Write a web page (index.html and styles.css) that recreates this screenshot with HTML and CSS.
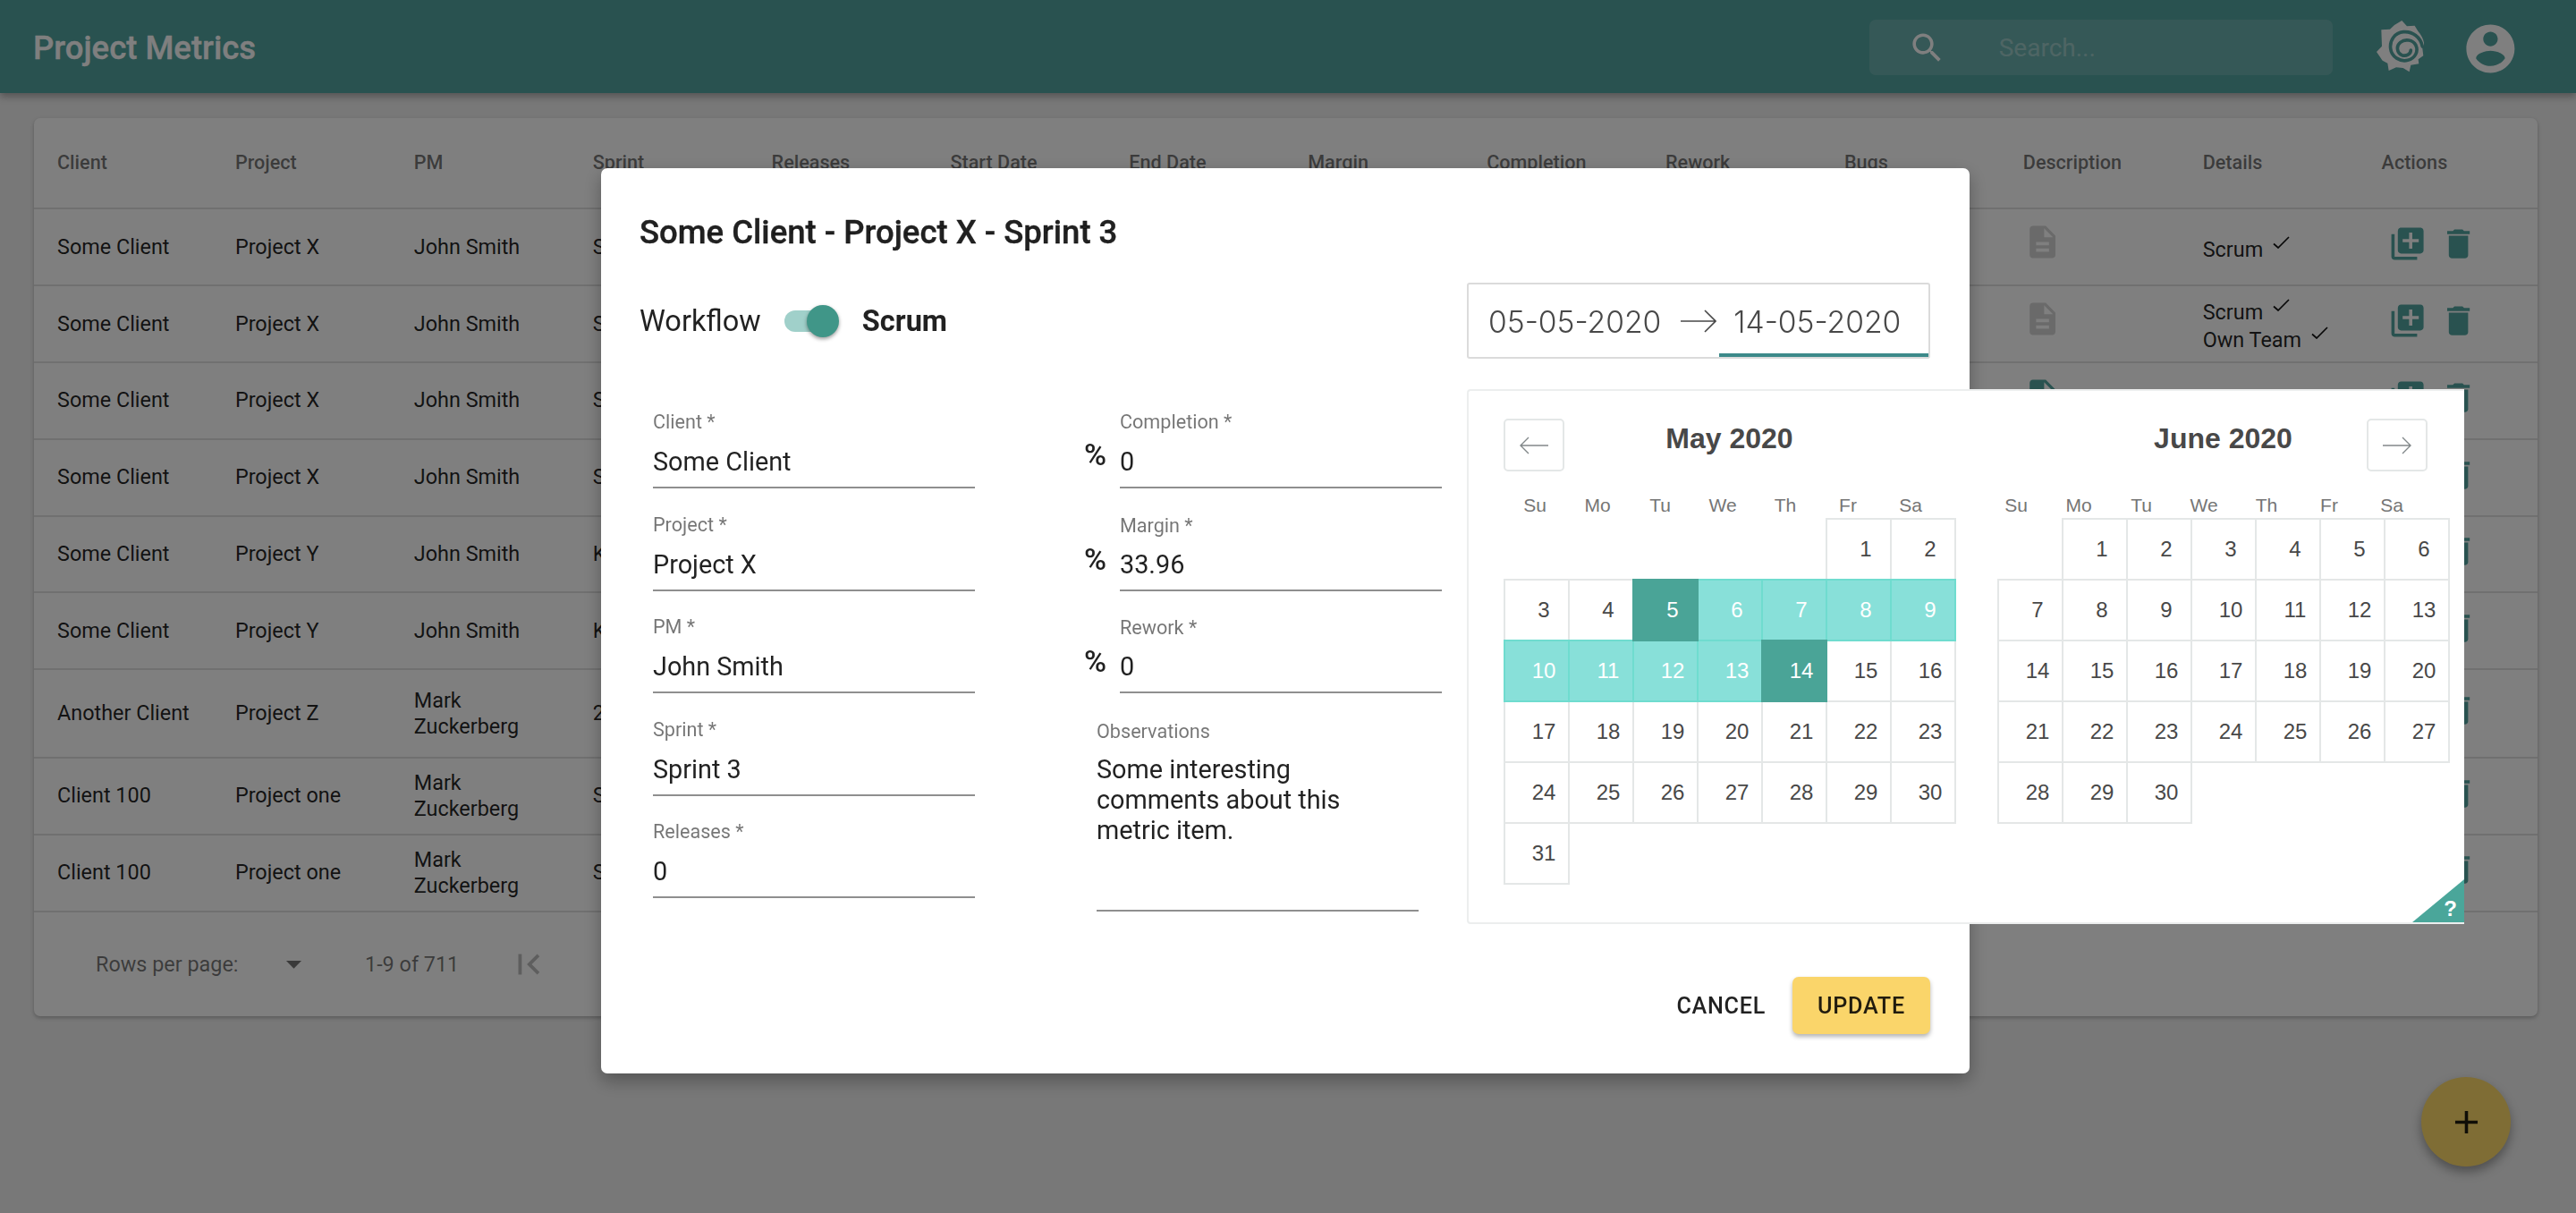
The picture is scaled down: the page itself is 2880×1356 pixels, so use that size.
FILE: index.html
```html
<!DOCTYPE html>
<html lang="en">
<head>
<meta charset="utf-8">
<title>Project Metrics</title>
<link rel="stylesheet" href="styles.css">
</head>
<body>
<svg class="sprite" aria-hidden="true">
  <symbol id="i-doc" viewBox="0 0 24 24"><path d="M14 2H6c-1.1 0-2 .9-2 2v16c0 1.1.9 2 2 2h12c1.1 0 2-.9 2-2V8l-6-6zm2 16H8v-2h8v2zm0-4H8v-2h8v2zm-3-5V3.5L18.5 9H13z"/></symbol>
  <symbol id="i-add" viewBox="0 0 24 24"><path d="M4 6H2v14c0 1.1.9 2 2 2h14v-2H4V6zm16-4H8c-1.1 0-2 .9-2 2v12c0 1.1.9 2 2 2h12c1.1 0 2-.9 2-2V4c0-1.1-.9-2-2-2zm-1 9h-4v4h-2v-4H9V9h4V5h2v4h4v2z"/></symbol>
  <symbol id="i-del" viewBox="0 0 24 24"><path d="M6 19c0 1.1.9 2 2 2h8c1.1 0 2-.9 2-2V7H6v12zM19 4h-3.5l-1-1h-5l-1 1H5v2h14V4z"/></symbol>
  <symbol id="i-check" viewBox="0 0 19 14"><path d="M1 8.5 6 13 18 1" fill="none" stroke="currentColor" stroke-width="1.7"/></symbol>
</svg>

<header class="appbar">
  <h1 class="app-title">Project Metrics</h1>
  <div class="search">
    <svg class="search-icon" viewBox="0 0 24 24"><path d="M15.5 14h-.79l-.28-.27C15.41 12.59 16 11.11 16 9.5 16 5.91 13.09 3 9.5 3S3 5.91 3 9.5 5.91 16 9.5 16c1.61 0 3.09-.59 4.23-1.57l.27.28v.79l5 4.99L20.49 19l-4.99-5zm-6 0C7.01 14 5 11.99 5 9.5S7.01 5 9.5 5 14 7.01 14 9.5 11.99 14 9.5 14z"/></svg>
    <span class="search-text">Search...</span>
  </div>
  <svg class="gear" viewBox="50 37 160 173">
    <path class="gear-body" d="M135 37 152 56 178 54 189 72C203 88 210 105 210 122L203 122 207 155 190 167 192 182 165 186 160 209 139 196 116 194 91 205 87 180 70 171 50 142 68 123 66 68 95 66 110 52Z"/>
    <path class="gear-swirl" d="M204 124C198 92 170 72 140 75 110 78 94 104 97 130 100 160 130 176 155 170 180 164 191 140 182 120 172 100 145 98 130 110 115 122 118 145 135 153 150 158 165 150 165 136"/>
  </svg>
  <svg class="account" viewBox="0 0 24 24"><path d="M12 2C6.48 2 2 6.48 2 12s4.48 10 10 10 10-4.48 10-10S17.52 2 12 2zm0 3c1.66 0 3 1.34 3 3s-1.34 3-3 3-3-1.34-3-3 1.34-3 3-3zm0 14.2c-2.5 0-4.71-1.28-6-3.22.03-1.99 4-3.08 6-3.08 1.99 0 5.97 1.09 6 3.08-1.29 1.94-3.5 3.22-6 3.22z"/></svg>
</header>

<main class="content">
  <section class="card">
    <div class="row head">
      <span>Client</span><span>Project</span><span>PM</span><span>Sprint</span><span>Releases</span><span>Start Date</span><span>End Date</span><span>Margin</span><span>Completion</span><span>Rework</span><span>Bugs</span><span>Description</span><span>Details</span><span>Actions</span>
    </div>
    <div class="row">
      <span>Some Client</span><span>Project X</span><span>John Smith</span><span class="clip">Sprint 3</span>
      <span class="cell-icon"><svg class="ico doc-empty"><use href="#i-doc"/></svg></span>
      <span class="details"><span class="tag">Scrum<svg class="check"><use href="#i-check"/></svg></span></span>
      <span class="actions"><svg class="ico teal"><use href="#i-add"/></svg><svg class="ico teal"><use href="#i-del"/></svg></span>
    </div>
    <div class="row">
      <span>Some Client</span><span>Project X</span><span>John Smith</span><span class="clip">Sprint 2</span>
      <span class="cell-icon"><svg class="ico doc-empty"><use href="#i-doc"/></svg></span>
      <span class="details"><span class="tag">Scrum<svg class="check"><use href="#i-check"/></svg></span><span class="tag">Own Team<svg class="check"><use href="#i-check"/></svg></span></span>
      <span class="actions"><svg class="ico teal"><use href="#i-add"/></svg><svg class="ico teal"><use href="#i-del"/></svg></span>
    </div>
    <div class="row">
      <span>Some Client</span><span>Project X</span><span>John Smith</span><span class="clip">Sprint 1</span>
      <span class="cell-icon"><svg class="ico teal"><use href="#i-doc"/></svg></span>
      <span class="details"></span>
      <span class="actions"><svg class="ico teal"><use href="#i-add"/></svg><svg class="ico teal"><use href="#i-del"/></svg></span>
    </div>
    <div class="row">
      <span>Some Client</span><span>Project X</span><span>John Smith</span><span class="clip">Sprint 0</span>
      <span class="cell-icon"><svg class="ico teal"><use href="#i-doc"/></svg></span>
      <span class="details"></span>
      <span class="actions"><svg class="ico teal"><use href="#i-add"/></svg><svg class="ico teal"><use href="#i-del"/></svg></span>
    </div>
    <div class="row">
      <span>Some Client</span><span>Project Y</span><span>John Smith</span><span class="clip">Kanban</span>
      <span class="cell-icon"><svg class="ico teal"><use href="#i-doc"/></svg></span>
      <span class="details"></span>
      <span class="actions"><svg class="ico teal"><use href="#i-add"/></svg><svg class="ico teal"><use href="#i-del"/></svg></span>
    </div>
    <div class="row">
      <span>Some Client</span><span>Project Y</span><span>John Smith</span><span class="clip">Kanban</span>
      <span class="cell-icon"><svg class="ico teal"><use href="#i-doc"/></svg></span>
      <span class="details"></span>
      <span class="actions"><svg class="ico teal"><use href="#i-add"/></svg><svg class="ico teal"><use href="#i-del"/></svg></span>
    </div>
    <div class="row tall">
      <span>Another Client</span><span>Project Z</span><span>Mark<br>Zuckerberg</span><span class="clip">2020</span>
      <span class="cell-icon"><svg class="ico teal"><use href="#i-doc"/></svg></span>
      <span class="details"></span>
      <span class="actions"><svg class="ico teal"><use href="#i-add"/></svg><svg class="ico teal"><use href="#i-del"/></svg></span>
    </div>
    <div class="row">
      <span>Client 100</span><span>Project one</span><span>Mark<br>Zuckerberg</span><span class="clip">Sprint 2</span>
      <span class="cell-icon"><svg class="ico teal"><use href="#i-doc"/></svg></span>
      <span class="details"></span>
      <span class="actions"><svg class="ico teal"><use href="#i-add"/></svg><svg class="ico teal"><use href="#i-del"/></svg></span>
    </div>
    <div class="row">
      <span>Client 100</span><span>Project one</span><span>Mark<br>Zuckerberg</span><span class="clip">Sprint 1</span>
      <span class="cell-icon"><svg class="ico teal"><use href="#i-doc"/></svg></span>
      <span class="details"></span>
      <span class="actions"><svg class="ico teal"><use href="#i-add"/></svg><svg class="ico teal"><use href="#i-del"/></svg></span>
    </div>
    <footer class="pager">
      <span class="pager-label">Rows per page:</span>
      <svg class="pager-caret" viewBox="0 0 24 24"><path d="M7 10l5 5 5-5z"/></svg>
      <span class="pager-count">1-9 of 711</span>
      <svg class="pager-btn first" viewBox="0 0 24 24"><path d="M18.41 16.59L13.82 12l4.59-4.59L17 6l-6 6 6 6zM6 6h2v12H6z"/></svg>
      <svg class="pager-btn prev" viewBox="0 0 24 24"><path d="M15.41 7.41L14 6l-6 6 6 6 1.41-1.41L10.83 12z"/></svg>
    </footer>
  </section>
</main>

<button class="fab" type="button" aria-label="Add"><svg viewBox="0 0 24 24"><path d="M19 13h-6v6h-2v-6H5v-2h6V5h2v6h6v2z"/></svg></button>

<div class="backdrop">
  <div class="modal" role="dialog">
    <h2 class="modal-title">Some Client - Project X - Sprint 3</h2>
    <div class="modal-top">
      <div class="workflow">
        <span class="workflow-label">Workflow</span>
        <span class="toggle"><span class="toggle-track"></span><span class="toggle-knob"></span></span>
        <strong class="workflow-value">Scrum</strong>
      </div>
      <div class="daterange">
        <span class="date-input">05-05-2020</span>
        <svg class="date-arrow" viewBox="0 0 40 26"><path d="M0 13H39M27 1 39 13 27 25"/></svg>
        <span class="date-input date-active">14-05-2020</span>

        <div class="calendar">
          <button class="cal-nav cal-prev" type="button" aria-label="Previous month"><svg viewBox="0 0 32 20"><path d="M32 10H1M10 1 1 10 10 19"/></svg></button>
          <button class="cal-nav cal-next" type="button" aria-label="Next month"><svg viewBox="0 0 32 20"><path d="M0 10H31M22 1 31 10 22 19"/></svg></button>
          <div class="month">
            <div class="month-title">May 2020</div>
            <div class="week-names"><span>Su</span><span>Mo</span><span>Tu</span><span>We</span><span>Th</span><span>Fr</span><span>Sa</span></div>
            <div class="days">
              <span class="blank"></span><span class="blank"></span><span class="blank"></span><span class="blank"></span><span class="blank"></span><span class="day">1</span><span class="day">2</span>
              <span class="day">3</span><span class="day">4</span><span class="day sel">5</span><span class="day rng">6</span><span class="day rng">7</span><span class="day rng">8</span><span class="day rng">9</span>
              <span class="day rng">10</span><span class="day rng">11</span><span class="day rng">12</span><span class="day rng">13</span><span class="day sel">14</span><span class="day">15</span><span class="day">16</span>
              <span class="day">17</span><span class="day">18</span><span class="day">19</span><span class="day">20</span><span class="day">21</span><span class="day">22</span><span class="day">23</span>
              <span class="day">24</span><span class="day">25</span><span class="day">26</span><span class="day">27</span><span class="day">28</span><span class="day">29</span><span class="day">30</span>
              <span class="day">31</span>
            </div>
          </div>
          <div class="month month-next">
            <div class="month-title">June 2020</div>
            <div class="week-names"><span>Su</span><span>Mo</span><span>Tu</span><span>We</span><span>Th</span><span>Fr</span><span>Sa</span></div>
            <div class="days">
              <span class="blank"></span><span class="day">1</span><span class="day">2</span><span class="day">3</span><span class="day">4</span><span class="day">5</span><span class="day">6</span>
              <span class="day">7</span><span class="day">8</span><span class="day">9</span><span class="day">10</span><span class="day">11</span><span class="day">12</span><span class="day">13</span>
              <span class="day">14</span><span class="day">15</span><span class="day">16</span><span class="day">17</span><span class="day">18</span><span class="day">19</span><span class="day">20</span>
              <span class="day">21</span><span class="day">22</span><span class="day">23</span><span class="day">24</span><span class="day">25</span><span class="day">26</span><span class="day">27</span>
              <span class="day">28</span><span class="day">29</span><span class="day">30</span>
            </div>
          </div>
          <span class="cal-help">?</span>
        </div>
      </div>
    </div>

    <div class="form">
      <div class="form-col">
        <div class="field"><label>Client *</label><div class="value">Some Client</div></div>
        <div class="field"><label>Project *</label><div class="value">Project X</div></div>
        <div class="field"><label>PM *</label><div class="value">John Smith</div></div>
        <div class="field"><label>Sprint *</label><div class="value">Sprint 3</div></div>
        <div class="field"><label>Releases *</label><div class="value">0</div></div>
      </div>
      <div class="form-col">
        <div class="pct-row"><span class="pct">%</span><div class="field"><label>Completion *</label><div class="value">0</div></div></div>
        <div class="pct-row"><span class="pct">%</span><div class="field"><label>Margin *</label><div class="value">33.96</div></div></div>
        <div class="pct-row"><span class="pct">%</span><div class="field"><label>Rework *</label><div class="value">0</div></div></div>
        <div class="field notes"><label>Observations</label><div class="value">Some interesting comments about this metric item.</div></div>
      </div>
    </div>

    <div class="modal-actions">
      <button class="btn" type="button">Cancel</button>
      <button class="btn btn-primary" type="button">Update</button>
    </div>
  </div>
</div>
</body>
</html>
```

FILE: styles.css
```css
* { box-sizing: border-box; }
html, body { margin: 0; height: 100%; overflow: hidden; }
body {
  background: #f0f0f0;
  font-family: Roboto, "Liberation Sans", sans-serif;
  color: rgba(0, 0, 0, .87);
}
.sprite { display: none; }

/* app bar */
.appbar {
  height: 104px;
  background: #52a4a0;
  display: flex;
  align-items: center;
  padding: 0 63.6px 0 37px;
  box-shadow: 0 4px 8px rgba(0, 0, 0, .3);
  position: relative;
}
.app-title { margin: 2px 0 0; font-size: 36.5px; font-weight: 500; color: #fff; flex: 1; -webkit-text-stroke: .35px #fff; }
.search {
  width: 518px;
  height: 62px;
  margin-top: 2px;
  border-radius: 7px;
  background: rgba(255, 255, 255, .15);
  display: flex;
  align-items: center;
  padding-left: 43px;
}
.search-icon { width: 43px; height: 43px; fill: #fff; }
.search-text { margin-left: 59px; font-size: 28px; color: rgba(255, 255, 255, .36); }
.gear { width: 53.3px; height: 57.7px; margin-left: 49px; }
.gear-body { fill: #fff; }
.gear-swirl { fill: none; stroke: #52a4a0; stroke-width: 11; stroke-linecap: round; }
.account { width: 64.8px; height: 64.8px; margin-left: 41.6px; fill: #fff; margin-top: 4px; }

/* table card */
.content { padding: 28px 43px 0 38px; }
.card {
  background: #fff;
  border-radius: 7px;
  box-shadow: 0 2px 4px rgba(0, 0, 0, .25);
  overflow: hidden;
}
.row {
  display: grid;
  grid-template-columns: 198.9px repeat(9, 199.9px) 199.9px 200.9px 199.9px 1fr;
  align-items: center;
  height: 85.9px;
  padding-left: 26px;
  border-bottom: 2px solid #e0e0e0;
  font-size: 23.4px;
  line-height: 28.5px;
}
.row.head { height: 102px; padding-top: 1px; font-size: 21.6px; font-weight: 500; color: rgba(0, 0, 0, .54); }
.row.tall { height: 98.4px; }
.clip { grid-column: 4 / span 8; width: 10px; overflow: hidden; white-space: nowrap; }
.ico { width: 43.2px; height: 43.2px; display: block; }
.teal { fill: #52a4a0; }
.doc-empty { fill: #d4d4d4; }
.cell-icon { padding-bottom: 10px; }
.actions { display: flex; gap: 14.4px; padding: 0 0 7px 7px; }
.details { display: flex; flex-direction: column; padding-top: 7px; }
.tag { line-height: 31px; white-space: nowrap; }
.check { width: 19px; height: 14px; margin-left: 11px; vertical-align: 9px; color: #111; overflow: visible; }

.pager {
  height: 116px;
  display: flex;
  align-items: center;
  padding-left: 69px;
  font-size: 23.4px;
  color: rgba(0, 0, 0, .54);
}
.pager-label { width: 156px; white-space: nowrap; }
.pager-caret { width: 41px; height: 41px; margin-left: 45px; fill: rgba(0, 0, 0, .54); flex: none; }
.pager-count { width: 102px; margin-left: 59px; white-space: nowrap; }
.pager-btn { width: 46px; height: 46px; fill: rgba(0, 0, 0, .26); flex: none; }
.pager-btn.first { margin-left: 58px; }
.pager-btn.prev { margin-left: 46px; }

/* floating action */
.fab {
  position: fixed;
  right: 73px;
  bottom: 52px;
  width: 100px;
  height: 100px;
  border: 0;
  padding: 0;
  border-radius: 50%;
  background: #feda6a;
  box-shadow: 0 6px 12px rgba(0, 0, 0, .35);
  display: flex;
  align-items: center;
  justify-content: center;
}
.fab svg { width: 43px; height: 43px; fill: rgba(0, 0, 0, .87); }

/* dialog */
.backdrop { position: fixed; inset: 0; background: rgba(0, 0, 0, .5); }
.modal {
  position: absolute;
  left: 672px;
  top: 188px;
  width: 1530px;
  height: 1012px;
  background: #fff;
  border-radius: 7px;
  padding: 50px 44px 44px;
  display: flex;
  flex-direction: column;
  box-shadow: 0 8px 20px rgba(0, 0, 0, .3);
}
.modal-title { margin: 0 0 0 -1px; font-size: 36.5px; line-height: 44px; font-weight: 500; -webkit-text-stroke: .35px rgba(0, 0, 0, .87); }
.modal-top { display: flex; justify-content: space-between; align-items: center; margin-top: 34px; height: 85px; }
.workflow { display: flex; align-items: center; gap: 26px; font-size: 32.5px; margin-left: -1px; }
.workflow-value { font-weight: 700; }
.toggle { display: flex; align-items: center; }
.toggle-track { width: 54px; height: 24px; border-radius: 12px; background: #a0d0ca; }
.toggle-knob { width: 36px; height: 36px; margin-left: -29px; border-radius: 50%; background: #409688; box-shadow: 0 2px 4px rgba(0, 0, 0, .4); }

.daterange {
  position: relative;
  width: 518px;
  height: 85px;
  border: 2px solid #dbdbdb;
  border-radius: 3px;
  display: flex;
  align-items: center;
  padding: 1px 0 0 22px;
}
.date-input { font-family: Inter, Roboto, sans-serif; font-size: 33.6px; font-weight: 300; color: #484848; white-space: nowrap; }
.date-arrow { width: 40px; height: 26px; margin: 0 19px 0 22px; fill: none; stroke: #484848; stroke-width: 1.6; }
.date-active::after {
  content: "";
  position: absolute;
  left: 280px;
  right: 0;
  bottom: 0;
  height: 4px;
  background: #3c8a8a;
}

/* calendar */
.calendar {
  position: absolute;
  left: -2px;
  top: 117px;
  width: 1115px;
  height: 598px;
  background: #fff;
  border: 2px solid #eceeee;
  border-right: 0;
  border-radius: 4px 0 0 4px;
  display: flex;
  gap: 47px;
  padding-left: 39px;
  font-family: "Liberation Sans", Arial, sans-serif;
  color: #484848;
}
.cal-nav {
  position: absolute;
  top: 31px;
  width: 68px;
  height: 59px;
  padding: 0;
  background: #fff;
  border: 2px solid #e4e7e7;
  border-radius: 5px;
  display: flex;
  align-items: center;
  justify-content: center;
}
.cal-nav svg { width: 32px; height: 20px; fill: none; stroke: #82888a; stroke-width: 1.4; }
.cal-prev { left: 39px; }
.cal-next { right: 41px; }
.month { width: 505px; }
.month-title { height: 110px; padding-top: 33px; text-align: center; font-size: 32px; font-weight: 700; line-height: 40px; }
.week-names { display: grid; grid-template-columns: repeat(7, 70px); height: 32px; color: #757575; font-size: 21px; line-height: 36px; text-align: center; }
.month-next .week-names { margin-left: -14px; }
.days { display: grid; grid-template-columns: repeat(7, 72px); grid-auto-rows: 68px; }
.day {
  position: relative;
  width: 74px;
  height: 70px;
  border: 2px solid #e4e7e7;
  padding-left: 16px;
  font-size: 24px;
  line-height: 66px;
  text-align: center;
}
.rng { background: #88e0d9; border-color: #6fdccf; color: #fff; z-index: 1; }
.sel { background: #4aa497; border-color: #4aa497; color: #fff; z-index: 2; }
.cal-help {
  position: absolute;
  right: 0;
  bottom: 0;
  width: 58px;
  height: 48px;
  padding: 19px 8px 0 0;
  background: #4aa69a;
  clip-path: polygon(100% 0, 100% 100%, 0 100%);
  color: #fff;
  font-size: 24px;
  font-weight: 700;
  line-height: 28px;
  text-align: right;
}

/* form */
.form { display: grid; grid-template-columns: 360px 400px; column-gap: 122px; margin: 30px 0 0 14px; }
.field { height: 114.5px; padding-top: 28px; }
.field label { display: block; font-size: 21.6px; line-height: 26px; color: rgba(0, 0, 0, .54); }
.value { height: 47px; margin-top: 14px; border-bottom: 2px solid #8f8f8f; font-size: 28.8px; line-height: 34px; }
.pct-row { display: flex; }
.pct-row + .pct-row label { position: relative; top: 1px; }
.pct-row .field { width: 360px; }
.pct { width: 40px; padding-top: 57px; font-size: 34px; line-height: 40px; font-weight: 500; }
.pct-row + .pct-row .pct { padding-top: 59px; }
.notes { margin: 1px 0 0 14px; width: 360px; height: auto; padding-top: 29px; }
.notes .value { height: 176px; margin-top: 12px; width: 360px; }

.modal-actions { margin-top: auto; display: flex; justify-content: flex-end; align-items: center; gap: 30px; }
.btn {
  border: 0;
  background: transparent;
  padding: 0;
  font-family: Roboto, sans-serif;
  font-size: 25.2px;
  font-weight: 500;
  letter-spacing: .72px;
  text-transform: uppercase;
  color: rgba(0, 0, 0, .87);
}
.btn-primary { width: 154px; height: 64px; border-radius: 7px; background: #fad56a; box-shadow: 0 3px 5px rgba(0, 0, 0, .3); }
```
